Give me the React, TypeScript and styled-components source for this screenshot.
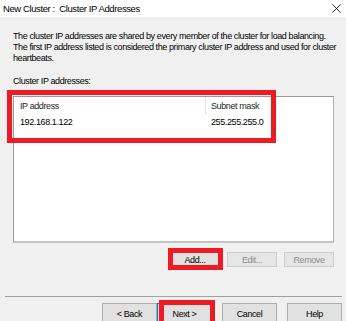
import React from 'react';
import styled, {createGlobalStyle} from "styled-components";

const GlobalStyle = createGlobalStyle`
  html, body {
    margin: 0;
    padding: 0;
    background: #f0f0f0;
    font-family: "Liberation Sans", Arial, sans-serif;
    color: #000;
  }
`

const Window = styled.div`
  width: 346px;
  height: 321px;
  overflow: hidden;
  display: flex;
  flex-direction: column;
  background: #f0f0f0;
  font-size: 9px;
  letter-spacing: -0.4px;
`

const TitleBar = styled.div`
  height: 17px;
  background: #fff;
  display: flex;
  align-items: center;
  justify-content: space-between;
  padding: 0 5px 0 3px;
  font-size: 9.5px;
  letter-spacing: -0.4px;
  flex-shrink: 0;
`

const Close = styled.svg`
  width: 9px;
  height: 9px;
`

const Content = styled.div`
  padding: 14px 12px 0 13px;
  display: flex;
  flex-direction: column;
`

const Description = styled.p`
  margin: 0;
  line-height: 11px;
  white-space: nowrap;
`

const Label = styled.div`
  margin-top: 12px;
  line-height: 11px;
`

const ListWrap = styled.div`
  position: relative;
  margin-top: 9px;
`

const ListView = styled.div`
  height: 144px;
  background: #fff;
  border-left: 1px solid #9a9a9a;
  border-top: 1px solid #9a9a9a;
  border-right: 1px solid #b0b0b0;
  border-bottom: 2px solid #c4c4c4;
`

const Row = styled.div<{ $header?: boolean }>`
  display: grid;
  grid-template-columns: 191px 1fr;
  height: ${p => (p.$header ? 18 : 14)}px;
  align-items: center;
  color: ${p => (p.$header ? '#1e1e1e' : '#000')};
`

const Cell = styled.div<{ $divider?: boolean }>`
  padding-left: ${p => (p.$divider ? 5 : 6)}px;
  height: 100%;
  display: flex;
  align-items: center;
  border-left: ${p => (p.$divider ? '1px solid #e5e5e5' : 'none')};
`

const Highlight = styled.div`
  position: absolute;
  left: -6px;
  top: -6px;
  width: 259px;
  height: 43px;
  border: 5px solid #ed1c24;
  pointer-events: none;
`

const ButtonRow = styled.div`
  display: flex;
  justify-content: flex-end;
  gap: 7px;
  margin-top: 9px;
`

const Button = styled.button<{ $focus?: boolean }>`
  position: relative;
  width: 50px;
  height: 15px;
  padding: 0;
  font-family: "Liberation Sans", Arial, sans-serif;
  font-size: 9px;
  letter-spacing: -0.4px;
  background: #e1e1e1;
  border: 1px solid ${p => (p.$focus ? '#0078d7' : '#adadad')};
  color: #000;
  &:disabled {
    background: #e6e6e6;
    border-color: #cdcdcd;
    color: #8d8d8d;
  }
`

const WizardButton = styled(Button)`
  width: 55px;
  height: 22px;
`

const Marked = styled.span<{ $l: number; $t: number; $r: number; $b: number }>`
  position: absolute;
  left: ${p => p.$l}px;
  top: ${p => p.$t}px;
  right: ${p => p.$r}px;
  bottom: ${p => p.$b}px;
  border: 5px solid #ed1c24;
  pointer-events: none;
`

const Footer = styled.div`
  margin-top: 29px;
  padding: 0 4px 0 5px;
`

const Separator = styled.div`
  height: 1px;
  background: #a0a0a0;
  margin-bottom: 6px;
`

const FooterButtons = styled.div`
  display: flex;
  justify-content: flex-end;
`

const Gap = styled.div`
  width: 10px;
`

export default function App() {
    return (
        <>
            <GlobalStyle/>
            <Window>
                <TitleBar>
                    <span>New Cluster :&nbsp; Cluster IP Addresses</span>
                    <Close viewBox="0 0 10 10">
                        <path d="M0.5 0.5 L9.5 9.5 M9.5 0.5 L0.5 9.5" stroke="#111" strokeWidth="1"/>
                    </Close>
                </TitleBar>
                <Content>
                    <Description>
                        The cluster IP addresses are shared by every member of the cluster for load balancing.<br/>
                        The first IP address listed is considered the primary cluster IP address and used for cluster<br/>
                        heartbeats.
                    </Description>
                    <Label>Cluster IP addresses:</Label>
                    <ListWrap>
                        <ListView>
                            <Row $header>
                                <Cell>IP address</Cell>
                                <Cell $divider>Subnet mask</Cell>
                            </Row>
                            <Row>
                                <Cell>192.168.1.122</Cell>
                                <Cell style={{paddingLeft: 6}}>255.255.255.0</Cell>
                            </Row>
                        </ListView>
                        <Highlight/>
                    </ListWrap>
                    <ButtonRow>
                        <Button>Add...<Marked $l={-3} $t={-5} $r={-4} $b={-4}/></Button>
                        <Button disabled>Edit...</Button>
                        <Button disabled>Remove</Button>
                    </ButtonRow>
                </Content>
                <Footer>
                    <Separator/>
                    <FooterButtons>
                        <WizardButton>&lt; Back</WizardButton>
                        <WizardButton $focus>Next &gt;<Marked $l={1} $t={-4} $r={-4} $b={-4}/></WizardButton>
                        <Gap/>
                        <WizardButton>Cancel</WizardButton>
                        <Gap/>
                        <WizardButton>Help</WizardButton>
                    </FooterButtons>
                </Footer>
            </Window>
        </>
    );
}
